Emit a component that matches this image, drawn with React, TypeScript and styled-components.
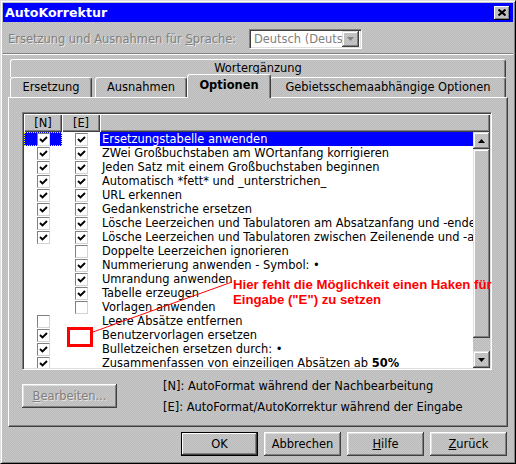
import React from 'react';
import styled, { createGlobalStyle } from 'styled-components';

const dither = 'repeating-conic-gradient(#bcbcbc 0 25%, #c6c6c6 0 50%) 0 0 / 2px 2px';

const GlobalStyle = createGlobalStyle`
  html, body {
    margin: 0;
    padding: 0;
    background: #c0c0c0;
  }
  body {
    font-family: "DejaVu Sans", "Liberation Sans", sans-serif;
    font-size: 11.45px;
    color: #000;
  }
`;

const Window = styled.div`
  position: relative;
  width: 516px;
  height: 464px;
  box-sizing: border-box;
  background: ${dither};
  border: 1px solid;
  border-color: #dfdfdf #000 #000 #dfdfdf;
  box-shadow: inset 1px 1px #fff, inset -1px -1px #808080;
  padding: 2px;
  display: flex;
  flex-direction: column;
  overflow: hidden;
`;

const TitleBar = styled.div`
  height: 19px;
  flex: none;
  background: #0000ff;
  display: flex;
  align-items: center;
  justify-content: space-between;
  padding: 0 3px 0 2px;
`;

const Title = styled.span`
  color: #fff;
  font-weight: bold;
  font-size: 12.6px;
`;

const CloseBtn = styled.div`
  width: 16px;
  height: 14px;
  box-sizing: border-box;
  background: #c0c0c0;
  box-shadow: inset -1px -1px #000, inset 1px 1px #fff, inset -2px -2px #808080;
  display: flex;
  align-items: center;
  justify-content: center;
`;

const LangRow = styled.div`
  margin-top: 7px;
  height: 20px;
  display: flex;
  align-items: center;
  padding-left: 5px;
`;

const DisabledText = styled.span`
  color: #808080;
  text-shadow: 1px 1px 0 rgba(255, 255, 255, 0.6);
`;

const LangLabel = styled(DisabledText)`
  width: 241px;
  flex: none;
  white-space: nowrap;
`;

const Combo = styled.div`
  width: 113px;
  height: 20px;
  box-sizing: border-box;
  background: #fff;
  border: 1px solid;
  border-color: #808080 #fff #fff #808080;
  box-shadow: inset 1px 1px #404040, inset -1px -1px #dfdfdf;
  display: flex;
  align-items: center;
  padding: 2px 2px 2px 4px;
  overflow: hidden;
`;

const ComboText = styled.span`
  flex: 1;
  overflow: hidden;
  white-space: nowrap;
  color: #808080;
`;

const ComboArrow = styled.div`
  width: 17px;
  height: 16px;
  flex: none;
  box-sizing: border-box;
  background: ${dither};
  box-shadow: inset -1px -1px #404040, inset 1px 1px #dfdfdf, inset -2px -2px #808080, inset 2px 2px #fff;
  display: flex;
  align-items: center;
  justify-content: center;
`;

const Separator = styled.div`
  margin-top: 4px;
  border-top: 1px solid #808080;
  border-bottom: 1px solid #fff;
`;

const TabArea = styled.div`
  margin: 4px 0 0 5px;
  width: 500px;
  display: flex;
  flex-direction: column;
`;

const TabRow = styled.div<{ $h: number }>`
  display: flex;
  align-items: flex-end;
  padding-left: 2px;
  height: ${p => p.$h}px;
`;

const Tab = styled.div<{ $w: number; $gap?: number; $active?: boolean; $h?: number }>`
  position: relative;
  width: ${p => p.$w}px;
  height: ${p => (p.$active ? 24 : p.$h ?? 20)}px;
  margin-left: ${p => p.$gap ?? 0}px;
  margin-bottom: ${p => (p.$active ? -1 : 0)}px;
  z-index: ${p => (p.$active ? 2 : 1)};
  box-sizing: border-box;
  background: ${dither};
  border-top: 1px solid #fff;
  border-left: 1px solid #fff;
  border-right: 1px solid #404040;
  box-shadow: inset -1px 0 #808080;
  border-radius: 3px 3px 0 0;
  display: flex;
  align-items: center;
  justify-content: center;
  padding-bottom: ${p => (p.$active ? 3 : 1)}px;
  font-weight: ${p => (p.$active ? 'bold' : 'normal')};
  white-space: nowrap;
`;

const Panel = styled.div`
  width: 500px;
  height: 330px;
  box-sizing: border-box;
  border: 1px solid;
  border-color: #fff #404040 #404040 #fff;
  box-shadow: inset -1px -1px #808080;
  padding: 14px 0 0 13px;
  display: flex;
  flex-direction: column;
`;

const ListView = styled.div`
  width: 470px;
  height: 258px;
  box-sizing: border-box;
  border: 1px solid;
  border-color: #808080 #fff #fff #808080;
  box-shadow: inset 1px 1px #404040, inset -1px -1px #dfdfdf;
  padding: 1px;
  display: flex;
  flex-direction: column;
`;

const Header = styled.div`
  height: 18px;
  flex: none;
  display: flex;
`;

const HeaderCell = styled.div<{ $w?: number }>`
  ${p => (p.$w ? `width: ${p.$w}px;` : 'flex: 1;')}
  box-sizing: border-box;
  background: ${dither};
  box-shadow: inset 1px 1px #fff, inset -1px -1px #404040, inset -2px -2px #808080;
  display: flex;
  align-items: center;
  justify-content: center;
`;

const Body = styled.div`
  flex: 1;
  display: flex;
  overflow: hidden;
`;

const Rows = styled.div`
  width: 449px;
  background: #fff;
  overflow: hidden;
`;

const Row = styled.div`
  height: 14px;
  display: flex;
`;

const CheckCell = styled.div<{ $sel?: boolean }>`
  width: 38px;
  flex: none;
  box-sizing: border-box;
  display: flex;
  align-items: center;
  justify-content: center;
  background: ${p => (p.$sel ? '#0000ff' : 'transparent')};
  ${p => (p.$sel ? 'outline: 1px dotted #ffff00; outline-offset: -1px;' : '')}
`;

const TextCell = styled.div<{ $sel?: boolean }>`
  flex: 1;
  padding-left: 2px;
  line-height: 14px;
  white-space: nowrap;
  overflow: hidden;
  background: ${p => (p.$sel ? '#0000ff' : 'transparent')};
  color: ${p => (p.$sel ? '#fff' : '#000')};
`;

const Box = styled.span`
  width: 13px;
  height: 13px;
  box-sizing: border-box;
  background: #fff;
  border: 1px solid;
  border-color: #808080 #d4d4d4 #d4d4d4 #808080;
  display: flex;
  align-items: center;
  justify-content: center;
`;

const ScrollBar = styled.div`
  width: 17px;
  flex: none;
  display: flex;
  flex-direction: column;
  background: ${dither};
`;

const ScrollBtn = styled.div<{ $h: number }>`
  height: ${p => p.$h}px;
  flex: none;
  box-sizing: border-box;
  background: ${dither};
  box-shadow: inset -1px -1px #404040, inset 1px 1px #dfdfdf, inset -2px -2px #808080, inset 2px 2px #fff;
  display: flex;
  align-items: center;
  justify-content: center;
`;

const Track = styled.div`
  flex: 1;
`;

const BottomRow = styled.div`
  margin-top: 9px;
  display: flex;
  align-items: flex-start;
`;

const PushButton = styled.div<{ $w: number; $default?: boolean }>`
  width: ${p => p.$w}px;
  height: 24px;
  box-sizing: border-box;
  background: ${dither};
  box-shadow: ${p =>
    p.$default
      ? 'inset 0 0 0 1px #000, inset -2px -2px #404040, inset 2px 2px #fff, inset -3px -3px #808080'
      : 'inset -1px -1px #404040, inset 1px 1px #fff, inset -2px -2px #808080, inset 2px 2px #dfdfdf'};
  display: flex;
  align-items: center;
  justify-content: center;
  flex: none;
`;

const EditButton = styled(PushButton)`
  margin-top: 5px;
`;

const Legend = styled.div`
  margin-left: 46px;
  display: flex;
  flex-direction: column;
  gap: 7px;
  line-height: 14px;
  white-space: nowrap;
`;

const ButtonRow = styled.div`
  margin-top: 5px;
  display: flex;
  justify-content: flex-end;
  gap: 6px;
  padding-right: 6px;
`;

const U = styled.span`
  text-decoration: underline;
`;

const Overlay = styled.div`
  position: absolute;
  left: -1px;
  top: -1px;
  width: 516px;
  height: 464px;
  pointer-events: none;
  z-index: 5;
`;

const Note = styled.div`
  position: absolute;
  left: 233px;
  top: 277px;
  color: #ff0000;
  font-family: "Liberation Sans", Arial, sans-serif;
  font-weight: bold;
  font-size: 13.2px;
  line-height: 15px;
  white-space: nowrap;
`;

const Check = () => (
  <svg width="9" height="9" viewBox="0 0 9 9">
    <path d="M1 4 L3.5 6.5 L8 2" fill="none" stroke="#000" strokeWidth="1.9" />
  </svg>
);

const CheckBox = ({ on }: { on: boolean }) => <Box>{on && <Check />}</Box>;

type Item = { n: boolean | null; e: boolean | null; text: React.ReactNode; sel?: boolean };

const items: Item[] = [
  { n: true, e: true, text: 'Ersetzungstabelle anwenden', sel: true },
  { n: true, e: true, text: 'ZWei Großbuchstaben am WOrtanfang korrigieren' },
  { n: true, e: true, text: 'Jeden Satz mit einem Großbuchstaben beginnen' },
  { n: true, e: true, text: 'Automatisch *fett* und _unterstrichen_' },
  { n: true, e: true, text: 'URL erkennen' },
  { n: true, e: true, text: 'Gedankenstriche ersetzen' },
  { n: true, e: true, text: 'Lösche Leerzeichen und Tabulatoren am Absatzanfang und -ende' },
  { n: true, e: true, text: 'Lösche Leerzeichen und Tabulatoren zwischen Zeilenende und -anfang' },
  { n: null, e: false, text: 'Doppelte Leerzeichen ignorieren' },
  { n: null, e: true, text: 'Nummerierung anwenden - Symbol: •' },
  { n: null, e: true, text: 'Umrandung anwenden' },
  { n: null, e: true, text: 'Tabelle erzeugen' },
  { n: null, e: false, text: 'Vorlagen anwenden' },
  { n: false, e: null, text: 'Leere Absätze entfernen' },
  { n: true, e: null, text: 'Benutzervorlagen ersetzen' },
  { n: true, e: null, text: 'Bulletzeichen ersetzen durch: •' },
  { n: true, e: null, text: <>Zusammenfassen von einzeiligen Absätzen ab <b>50%</b></> },
];

const Arrow = ({ up, color = '#000' }: { up?: boolean; color?: string }) => (
  <svg width="7" height="4" viewBox="0 0 7 4">
    <path d={up ? 'M0 4 L3.5 0 L7 4 Z' : 'M0 0 L7 0 L3.5 4 Z'} fill={color} />
  </svg>
);

const App: React.FC = () => {
  return (
    <>
      <GlobalStyle />
      <Window>
        <TitleBar>
          <Title>AutoKorrektur</Title>
          <CloseBtn>
            <svg width="8" height="7" viewBox="0 0 8 7">
              <path d="M0.5 0.5 L7.5 6.5 M7.5 0.5 L0.5 6.5" stroke="#000" strokeWidth="2" />
            </svg>
          </CloseBtn>
        </TitleBar>

        <LangRow>
          <LangLabel>Ersetzung und Ausnahmen für <U>S</U>prache:</LangLabel>
          <Combo>
            <ComboText>Deutsch (Deutschland)</ComboText>
            <ComboArrow>
              <Arrow color="#808080" />
            </ComboArrow>
          </Combo>
        </LangRow>

        <Separator />

        <TabArea>
          <TabRow $h={18}>
            <Tab $w={496} $h={18}>Wortergänzung</Tab>
          </TabRow>
          <TabRow $h={20}>
            <Tab $w={82}>Ersetzung</Tab>
            <Tab $w={92} $gap={3}>Ausnahmen</Tab>
            <Tab $w={84} $active>Optionen</Tab>
            <Tab $w={236} $gap={-1}>Gebietsschemaabhängige Optionen</Tab>
          </TabRow>
          <Panel>
            <ListView>
              <Header>
                <HeaderCell $w={38}>[N]</HeaderCell>
                <HeaderCell $w={38}>[E]</HeaderCell>
                <HeaderCell />
              </Header>
              <Body>
                <Rows>
                  {items.map((item, index) => (
                    <Row key={index}>
                      <CheckCell $sel={item.sel}>
                        {item.n !== null && <CheckBox on={item.n} />}
                      </CheckCell>
                      <CheckCell>{item.e !== null && <CheckBox on={item.e} />}</CheckCell>
                      <TextCell $sel={item.sel}>{item.text}</TextCell>
                    </Row>
                  ))}
                </Rows>
                <ScrollBar>
                  <ScrollBtn $h={17}>
                    <Arrow up />
                  </ScrollBtn>
                  <ScrollBtn $h={189} />
                  <Track />
                  <ScrollBtn $h={17}>
                    <Arrow />
                  </ScrollBtn>
                </ScrollBar>
              </Body>
            </ListView>
            <BottomRow>
              <EditButton $w={95}>
                <DisabledText>
                  <U>B</U>earbeiten...
                </DisabledText>
              </EditButton>
              <Legend>
                <span>[N]: AutoFormat während der Nachbearbeitung</span>
                <span>[E]: AutoFormat/AutoKorrektur während der Eingabe</span>
              </Legend>
            </BottomRow>
          </Panel>
        </TabArea>

        <ButtonRow>
          <PushButton $w={77} $default>OK</PushButton>
          <PushButton $w={77}>Abbrechen</PushButton>
          <PushButton $w={77}>
            <span><U>H</U>ilfe</span>
          </PushButton>
          <PushButton $w={77}>
            <span><U>Z</U>urück</span>
          </PushButton>
        </ButtonRow>

        <Overlay>
          <svg width="516" height="464" viewBox="0 0 516 464">
            <rect x="68.5" y="328.5" width="23" height="17" fill="none" stroke="#ff0000" strokeWidth="3" />
            <line x1="93" y1="332" x2="232" y2="282" stroke="#ff0000" strokeWidth="1" />
          </svg>
          <Note>
            Hier fehlt die Möglichkeit einen Haken für
            <br />
            Eingabe ("E") zu setzen
          </Note>
        </Overlay>
      </Window>
    </>
  );
};

export default App;
